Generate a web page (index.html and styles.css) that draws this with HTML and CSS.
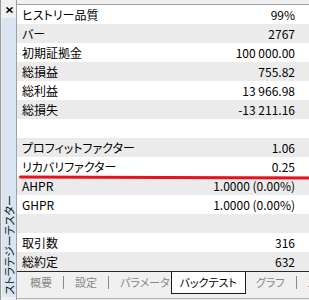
FILE: index.html
```html
<!DOCTYPE html>
<html lang="ja">
    <head>
        <meta charset="UTF-8">
        <title>ストラテジーテスター</title>
        <link rel="stylesheet" href="styles.css">
    </head>

    <body>
        <div class="window">
            <aside class="dock">
                <div class="dock-close">
                    <svg width="7" height="6" viewBox="0 0 7 6">
                        <path d="M0.5 0.5 L6.5 5.5 M6.5 0.5 L0.5 5.5" stroke="#000" stroke-width="1.6" fill="none"/>
                    </svg>
                </div>
                <div class="dock-title">
                    <span>ストラテジーテスター</span>
                </div>
            </aside>

            <main class="panel">
                <section class="report">
                    <div class="row"><span>ヒストリー品質</span><span>99%</span></div>
                    <div class="row"><span>バー</span><span>2767</span></div>
                    <div class="row"><span>初期証拠金</span><span>100 000.00</span></div>
                    <div class="row"><span>総損益</span><span>755.82</span></div>
                    <div class="row"><span>総利益</span><span>13 966.98</span></div>
                    <div class="row"><span>総損失</span><span>-13 211.16</span></div>
                    <div class="row"></div>
                    <div class="row"><span>プロフィットファクター</span><span>1.06</span></div>
                    <div class="row"><span>リカバリファクター</span><span>0.25</span></div>
                    <div class="row"><span>AHPR</span><span>1.0000 (0.00%)</span></div>
                    <div class="row"><span>GHPR</span><span>1.0000 (0.00%)</span></div>
                    <div class="row"></div>
                    <div class="row"><span>取引数</span><span>316</span></div>
                    <div class="row"><span>総約定</span><span>632</span></div>
                    <div class="marker"></div>
                </section>

                <footer class="tabs">
                    <span class="tab">概要</span>
                    <span class="sep"></span>
                    <span class="tab">設定</span>
                    <span class="sep"></span>
                    <span class="tab">パラメータ</span>
                    <span class="tab active">バックテスト</span>
                    <span class="tab">グラフ</span>
                    <span class="sep"></span>
                    <span class="tab">エキスパート</span>
                </footer>
            </main>
        </div>
    </body>
</html>
```

FILE: styles.css
```css
body {
    margin: 0;
    background-color: #f0f0f0;
    font-family: "Noto Sans CJK JP", sans-serif;
    font-feature-settings: "palt";
    color: #000;
    overflow: hidden;
}

.window {
    display: flex;
    width: 309px;
    height: 300px;
}

.dock {
    display: flex;
    flex-direction: column;
    width: 14px;
    padding-left: 1px;
    border-left: 1px solid #9a9a9a;
    border-right: 1px solid #a0a0a0;
}

.dock-close {
    height: 18px;
    padding-top: 7px;
    padding-left: 4px;
    box-sizing: border-box;
}

.dock-close svg {
    display: block;
}

.dock-title {
    flex: 1;
    display: flex;
    flex-direction: column;
    justify-content: flex-end;
    align-items: center;
    background-color: #dae5f1;
    margin-bottom: 3px;
    padding-bottom: 2px;
}

.dock-title span {
    writing-mode: vertical-rl;
    text-orientation: sideways;
    transform: rotate(180deg);
    font-size: 11px;
    line-height: 12px;
    color: #111;
}

.panel {
    flex: 1;
    display: flex;
    flex-direction: column;
    min-width: 0;
}

.report {
    position: relative;
    margin-top: 4px;
    border-top: 1px solid #a0a0a0;
    background-color: #fff;
}

.row {
    display: flex;
    justify-content: space-between;
    height: 19px;
    line-height: 19px;
    padding: 0 14px 0 5px;
    font-size: 12px;
    white-space: nowrap;
}

.row:nth-child(even) {
    background-color: #ebebeb;
}

/* red underline drawn over the table */
.marker {
    position: absolute;
    top: 171px;
    left: 2px;
    right: -2px;
    height: 3px;
    border-radius: 2px;
    background-color: #e5141c;
    transform: rotate(0.2deg);
}

.tabs {
    flex: 1;
    display: flex;
    align-items: flex-start;
    gap: 11px;
    padding-left: 13px;
    border-top: 1px solid #2a2a2a;
    border-bottom: 1px solid #b4b4b4;
    margin-bottom: 1px;
    font-size: 11px;
    white-space: nowrap;
    overflow: hidden;
}

.tab {
    height: 21px;
    line-height: 21px;
    color: #878787;
}

.sep {
    width: 1px;
    height: 13px;
    margin-top: 4px;
    flex-shrink: 0;
    background-color: #8a8a8a;
}

.tab.active {
    margin-left: -10px;
    margin-right: -1px;
    padding: 0 8px;
    background-color: #fff;
    border: 1px solid #1a1a1a;
    border-top: none;
    color: #000;
}
```
